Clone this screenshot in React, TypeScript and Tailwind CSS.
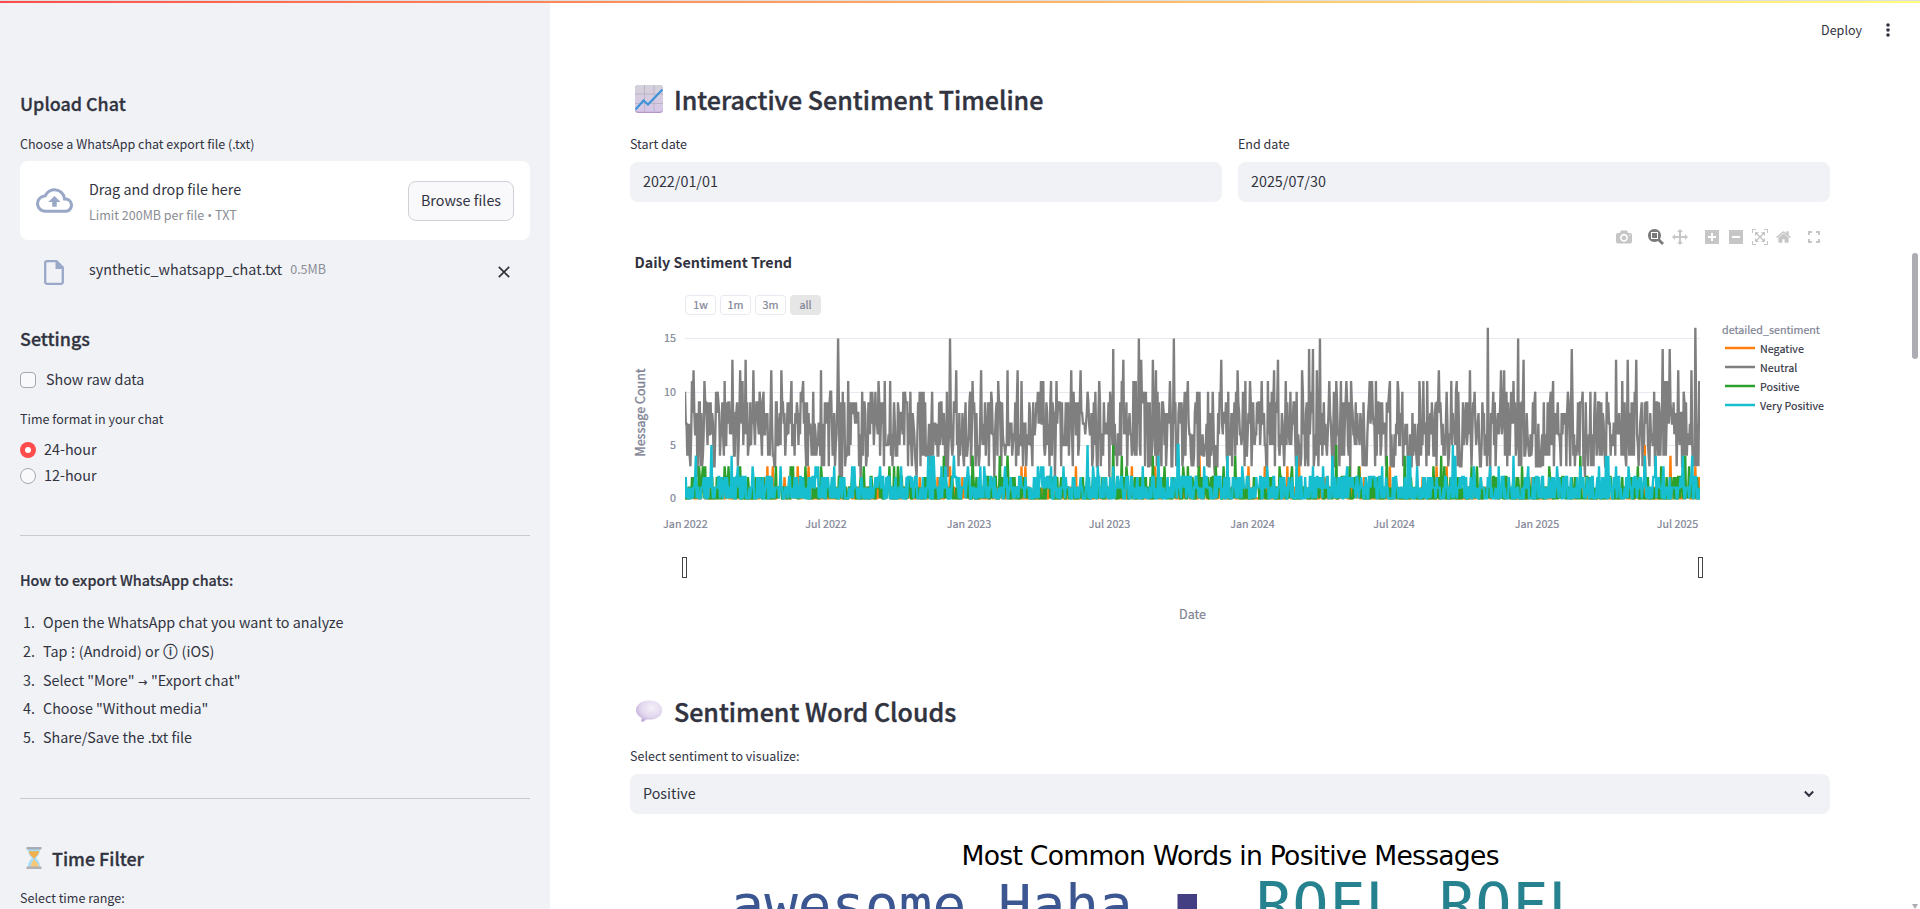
import type { ReactNode } from "react";

/* ---------- chart data ---------- */

const DAYS = 1307;
const PLOT_LEFT = 55;
const PLOT_WIDTH = 1015;
const ZERO_Y = 246.3;
const UNIT = 10.66;

type Peak = [value: number, positions: string];

const makeRandom = (seed: number) => {
  let s = seed;
  return () => {
    s = (s + 0x6d2b79f5) | 0;
    let t = Math.imul(s ^ (s >>> 15), 1 | s);
    t = (t + Math.imul(t ^ (t >>> 7), 61 | t)) ^ t;
    return ((t ^ (t >>> 14)) >>> 0) / 4294967296;
  };
};

const poisson = (rand: () => number, lambda: number) => {
  const limit = Math.exp(-lambda);
  let k = 0;
  let p = rand();
  while (p > limit) {
    k += 1;
    p *= rand();
  }
  return k;
};

/* Peak positions are tenths of a pixel from the left edge of the plot. */
const buildSeries = (seed: number, lambda: number, min: number, max: number, peaks: Peak[]) => {
  const rand = makeRandom(seed);
  const values = Array.from({ length: DAYS }, () => Math.max(min, Math.min(max, poisson(rand, lambda))));
  for (const [value, positions] of peaks) {
    for (const token of positions.split(" ")) {
      const day = Math.max(0, Math.min(DAYS - 1, Math.round(Number(token) / 7.772)));
      values[day] = value;
    }
  }
  return values;
};

const toPath = (values: number[]) =>
  values
    .map((v, i) => `${i ? "L" : "M"}${(PLOT_LEFT + (i * PLOT_WIDTH) / (DAYS - 1)).toFixed(2)},${(ZERO_Y - v * UNIT).toFixed(2)}`)
    .join("");

const neutral = buildSeries(41, 6.3, 3, 9, [
  [2, "122 1550 1570 1757 2314 2625 3096 3700 4243 5300 6650 8050 9000"],
  [10, "0 311 323 743 786 1157 1170 1279 1454 1465 1575 1775 1857 1870 1907 2186 2200 2250 2350 2361 2386 2471 2618 2854 3064 3529 3542 3889 4029 4100 4250 4596 4610 4729 4996 5011 5118 5148 5232 5279 5346 5429 5507 5580 5864 6057 6114 6175 6268 6318 6486 6611 7043 7132 7175 7421 7614 7711 7732 7900 8086 8214 8261 8500 8660 8832 8980 9055 9100 9220 9500 9690 9830 9930 9990"],
  [11, "68 196 400 575 1068 1179 1632 1939 2000 2050 2875 3132 3368 3557 3582 3657 3718 4139 4364 4482 4504 4846 4850 5025 5607 5653 5768 5832 6007 6446 6514 6557 6611 6657 6850 6868 6910 7050 7125 7346 7386 7425 7664 7721 8282 8679 9375 9803 9825 10143"],
  [12, "89 554 682 864 961 1357 2714 2964 3229 3325 3864 3957 4707 5528 5893 6168 6321 7535 7850 8157 8189 9936 10061"],
  [13, "471 607 4386 4561 4682 5361 5932 8389 9307 9425 9514"],
  [14, "4279 6243 6282 8871 9775 9850"],
  [15, "1528 2654 4536 4886 6353 8328"],
  [16, "8032 10107"],
]);

const negative = buildSeries(7, 0.5, 0, 1, [
  [2, "89 793 996 1925 2350 2525 2775 4889 4936 6257 6393 6796 6889 7375 8075 8475 8575 10139"],
  [3, "821 882 1125 1239 2654 3364 3407 3907 4471 4704 5632 5796 6025 6743 7046 7518 7614 10104"],
  [4, "5146 6143 9857"],
  [5, "9600"],
]);

const positive = buildSeries(23, 0.7, 0, 2, [
  [3, "139 175 204 400 432 550 907 1054 1082 1203 1357 1789 2043 2089 2132 4411 4793 4978 5025 5139 5311 5389 5946 6068 6646 6739 7482 7596 7864 7918 8368 8643 9532 9760 10043"],
  [4, "2589 2879 3146 3229 4368 4682 5504 7021 7199 7564 8950 10000"],
  [5, "4282 6511"],
]);

const veryPositive = buildSeries(99, 0.92, 0, 2, [
  [3, "525 675 954 1304 1332 1489 1668 1696 1950 2157 2561 2603 2829 2954 2996 3203 3529 3561 3582 3657 3782 4082 4125 4279 4575 5189 5571 5821 6282 6379 6618 6968 7318 7886 8050 8139 8436 8718 8950 9143 9311 9432 9785"],
  [4, "107 464 2436 2461 2486 2686 4736 5428 6114 6471 7228 7253 7703 8282 9207 9236 9596 9707 9982 10075"],
  [5, "261 4029 4936 4929 7675"],
]);

const series = [
  { label: "Negative", color: "#ff7f0e", values: negative },
  { label: "Neutral", color: "#7f7f7f", values: neutral },
  { label: "Positive", color: "#2ca02c", values: positive },
  { label: "Very Positive", color: "#17becf", values: veryPositive },
];

const ticks = [
  { x: 55.4, label: "Jan 2022" },
  { x: 196, label: "Jul 2022" },
  { x: 339, label: "Jan 2023" },
  { x: 479.5, label: "Jul 2023" },
  { x: 622.5, label: "Jan 2024" },
  { x: 764, label: "Jul 2024" },
  { x: 907, label: "Jan 2025" },
  { x: 1047.5, label: "Jul 2025" },
];

/* ---------- icons ---------- */

function BarIcon({ d, width = 1000, className }: { d: string; width?: number; className: string }) {
  return (
    <svg viewBox={`0 0 ${width} 1000`} className={`h-4 shrink-0 ${className}`}>
      <path d={d} transform="matrix(1 0 0 -1 0 850)" fill="currentColor" />
    </svg>
  );
}

const CAMERA =
  "m500 450c-83 0-150-67-150-150 0-83 67-150 150-150 83 0 150 67 150 150 0 83-67 150-150 150z m400 150h-120c-16 0-34 13-39 29l-31 93c-6 15-23 28-40 28h-340c-16 0-34-13-39-28l-31-94c-6-15-23-28-40-28h-120c-55 0-100-45-100-100v-450c0-55 45-100 100-100h800c55 0 100 45 100 100v450c0 55-45 100-100 100z m-400-550c-138 0-250 112-250 250 0 138 112 250 250 250 138 0 250-112 250-250 0-138-112-250-250-250z m365 380c-19 0-35 16-35 35 0 19 16 35 35 35 19 0 35-16 35-35 0-19-16-35-35-35z";
const ZOOM_BOX =
  "m1000-25l-250 251c40 63 63 138 63 218 0 224-182 406-407 406-224 0-406-182-406-406s183-406 407-406c80 0 155 22 218 62l250-250 125 125z m-812 250l0 438 437 0 0-438-437 0z m62 375l313 0 0-312-313 0 0 312z";
const PAN =
  "m1000 350l-187 188 0-125-250 0 0 250 125 0-188 187-187-187 125 0 0-250-250 0 0 125-188-188 186-187 0 125 252 0 0-250-125 0 187-188 188 188-125 0 0 250 250 0 0-126 187 188z";
const PLUS =
  "m1 787l0-875 875 0 0 875-875 0z m687-500l-187 0 0-187-125 0 0 187-188 0 0 125 188 0 0 187 125 0 0-187 187 0 0-125z";
const MINUS = "m0 788l0-876 876 0 0 876-876 0z m688-500l-500 0 0 125 500 0 0-125z";
const AUTOSCALE =
  "m250 850l-187 0-63 0 0-62 0-188 63 0 0 188 187 0 0 62z m688 0l-188 0 0-62 188 0 0-188 62 0 0 188 0 62-62 0z m-875-938l0 188-63 0 0-188 0-62 63 0 187 0 0 62-187 0z m875 188l0-188-188 0 0-62 188 0 62 0 0 62 0 188-62 0z m-125 188l-1 0-93-94-156 156 156 156 92-93 2 0 0 250-250 0 0-2 93-92-156-156-156 156 94 92 0 2-250 0 0-250 0 0 93 93 157-156-157-156-93 94 0 0 0-250 250 0 0 0-94 93 156 157 156-157-93-93 0 0 250 0 0 250z";
const HOME =
  "m786 296v-267q0-15-11-26t-25-10h-214v214h-143v-214h-214q-15 0-25 10t-11 26v267q0 1 0 2t0 2l321 264 321-264q1-1 1-4z m124 39l-34-41q-5-5-12-6h-2q-7 0-12 3l-386 322-386-322q-7-4-13-4-7 2-12 7l-35 41q-4 5-3 13t6 12l401 334q18 15 42 15t43-15l136-114v109q0 8 5 13t13 5h107q8 0 13-5t5-13v-227l122-102q5-5 6-12t-4-13z";

function ChartEmoji() {
  return (
    <svg viewBox="0 0 28 28" className="ml-[5px] h-7 w-7 shrink-0">
      <defs>
        <linearGradient id="sheet" x1="0" y1="0" x2="0" y2="1">
          <stop offset="0" stopColor="#d5d2da" />
          <stop offset="1" stopColor="#d6c6e8" />
        </linearGradient>
      </defs>
      <rect width="28" height="28" rx="3.5" fill="#b195c9" />
      <rect width="28" height="26.8" rx="3.5" fill="url(#sheet)" />
      <path d="M9.500 0v27M19 0v27M0 9h28M0 18.500h28" stroke="#bdb5c6" strokeWidth="1" />
      <path d="M0.500 24.500 8.500 15.500l4.500 4L27.500 4.500" fill="none" stroke="#3a93d8" strokeWidth="2.2" />
    </svg>
  );
}

function BubbleEmoji() {
  return (
    <svg viewBox="0 0 28 22" className="ml-[5px] h-[22px] w-7 shrink-0">
      <defs>
        <radialGradient id="bubble" cx="0.6" cy="0.35" r="0.7">
          <stop offset="0" stopColor="#f4f0f8" />
          <stop offset="0.6" stopColor="#e2d8ee" />
          <stop offset="1" stopColor="#bfa9d8" />
        </radialGradient>
      </defs>
      <path
        d="M14.200.5C21.500.5 27.200 4.700 27.200 10.200S21.500 19.600 14.200 19.600c-1 0-2-.1-2.900-.2-1.300 1.500-3 2.400-4.800 2.500-.4-1.400-.2-2.500.2-3.900C3.300 16.300 1 13.500 1 10.200 1 4.700 6.900.5 14.200.5Z"
        fill="url(#bubble)"
      />
    </svg>
  );
}

function HourglassEmoji() {
  return (
    <svg viewBox="0 0 16 22" className="ml-1.5 h-[22px] w-4 shrink-0">
      <path d="M2 2h12c0 4.500-1.500 6.300-4 9 2.500 2.700 4 4.500 4 9H2c0-4.500 1.500-6.300 4-9-2.500-2.700-4-4.500-4-9Z" fill="#a9dcf8" />
      <path d="M2.800 4.300h10.400c-.5 3-1.800 4.300-4.700 6.700v1h-1v-1C4.600 8.600 3.300 7.300 2.800 4.300Z" fill="#f0b04c" />
      <path d="M8 12.500c2 2 4.500 3.500 5 7.500H4.500c.2-3.500 2-5.500 3.500-7.500Z" fill="#f7c878" />
      <rect x="0.500" y="0" width="15" height="2.500" rx="0.6" fill="#a7abb5" />
      <rect x="0.500" y="19.500" width="15" height="2.500" rx="0.6" fill="#b2b0b3" />
    </svg>
  );
}

/* ---------- pieces ---------- */

function SideHeading({ children }: { children: ReactNode }) {
  return <h3 className="flex h-6 items-center text-[17.900px] leading-6 font-medium [-webkit-text-stroke:0.300px]">{children}</h3>;
}

function Label({ children }: { children: ReactNode }) {
  return <div className="h-5 text-[12.530px] leading-5">{children}</div>;
}

function PageHeading({ icon, children }: { icon: ReactNode; children: ReactNode }) {
  return (
    <h2 className="flex h-8 items-center text-[25px] leading-8 font-medium [-webkit-text-stroke:0.400px]">
      {icon}
      <span className="ml-[11px]">{children}</span>
    </h2>
  );
}

function Step({ n, children }: { n: number; children: ReactNode }) {
  return (
    <li className="flex h-[28.700px] items-center">
      <span className="mr-2 w-[15px] text-right">{n}.</span>
      <span className="whitespace-pre">{children}</span>
    </li>
  );
}

function Sidebar() {
  return (
    <aside className="flex h-full w-[550px] shrink-0 flex-col bg-[#f0f2f6] px-5 pt-[91px] text-[14.330px] leading-6">
      <SideHeading>Upload Chat</SideHeading>
      <div className="mt-[19px]">
        <Label>Choose a WhatsApp chat export file (.txt)</Label>
      </div>
      <div className="mt-[7px] flex h-[79px] items-center rounded-lg bg-white px-4">
        <svg viewBox="0 0 24 24" className="h-[37px] w-[37px] shrink-0 text-[#9aa8c8]" fill="currentColor">
          <path d="M19.350 10.040A7.490 7.490 0 0 0 12 4C9.110 4 6.600 5.640 5.350 8.040A5.994 5.994 0 0 0 0 14c0 3.310 2.690 6 6 6h13c2.760 0 5-2.240 5-5 0-2.640-2.050-4.780-4.650-4.960zM19 18H6c-2.210 0-4-1.790-4-4 0-2.050 1.530-3.760 3.560-3.970l1.070-.11.500-.95A5.469 5.469 0 0 1 12 6c2.620 0 4.880 1.860 5.390 4.430l.300 1.500 1.530.11A2.980 2.980 0 0 1 22 15c0 1.650-1.350 3-3 3zM8 13h2.550v3h2.900v-3H16l-4-4z" />
        </svg>
        <div className="mt-0.5 ml-4 flex grow flex-col">
          <span className="h-6">Drag and drop file here</span>
          <span className="mt-0.5 flex h-6 text-[12.530px] text-[#8b8d95]">
            Limit 200MB per file
            <span className="mx-[3px] [font-family:'Open_Sans'] text-[13px]">•</span>
            TXT
          </span>
        </div>
        <button className="h-10 w-[106px] rounded-lg border border-[#d0d1d7] bg-[#f9f9fb] pb-0.5">Browse files</button>
      </div>
      <div className="mt-[15px] flex h-8 items-center pr-4">
        <div className="flex w-[69px] justify-start pl-6">
          <svg viewBox="0 0 20 25" className="mt-0.5 h-[25px] w-5 text-[#9aa8c8]">
            <path d="M3 1.200h9.500l6.300 6.300V22a1.800 1.800 0 0 1-1.800 1.800H3A1.800 1.800 0 0 1 1.200 22V3A1.800 1.800 0 0 1 3 1.200Z" fill="none" stroke="currentColor" strokeWidth="2.300" />
            <path d="M11.500 1v8H19.500Z" fill="currentColor" />
          </svg>
        </div>
        <span className="mb-1">synthetic_whatsapp_chat.txt</span>
        <span className="mb-1 ml-2 grow text-[12.530px] text-[#8b8d95]">0.5MB</span>
        <svg viewBox="0 0 12 12" className="mt-0.5 mr-1 h-3 w-3">
          <path d="M.8.8 11.200 11.200M11.200.8.8 11.200" stroke="#31333f" strokeWidth="1.700" />
        </svg>
      </div>
      <div className="mt-[39px]">
        <SideHeading>Settings</SideHeading>
      </div>
      <label className="mt-[18px] flex h-6 items-center">
        <span className="mr-2.5 h-4 w-4 rounded border border-[#a6a8b1] bg-[#f9f9fb]" />
        <span className="pb-0.5">Show raw data</span>
      </label>
      <div className="mt-[17px]">
        <Label>Time format in your chat</Label>
      </div>
      <div className="mt-2 flex h-[26px] items-center">
        <span className="mr-2 flex h-4 w-4 items-center justify-center rounded-full bg-[#ff4b4b]">
          <span className="h-1.5 w-1.5 rounded-full bg-white" />
        </span>
        <span className="pb-0.5">24-hour</span>
      </div>
      <div className="flex h-[25px] items-center">
        <span className="mr-2 h-4 w-4 rounded-full border border-[#a6a8b1] bg-[#f9f9fb]" />
        <span className="pb-px">12-hour</span>
      </div>
      <hr className="mt-[47px] border-[#c8cad0]" />
      <p className="mt-8 h-6 font-medium [-webkit-text-stroke:0.200px]">How to export WhatsApp chats:</p>
      <ol className="mt-4 flex flex-col">
        <Step n={1}>Open the WhatsApp chat you want to analyze</Step>
        <Step n={2}>
          Tap <span className="inline-flex w-[5px] justify-center">⋮</span> (Android) or{" "}
          <span className="inline-flex w-4 justify-center [-webkit-text-stroke:0.400px]">ⓘ</span> (iOS)
        </Step>
        <Step n={3}>
          Select "More" <span className="inline-flex w-[10px] justify-center [font-family:'DejaVu_Sans'] text-[11px] leading-none [-webkit-text-stroke:0.200px]">→</span> "Export chat"
        </Step>
        <Step n={4}>Choose "Without media"</Step>
        <Step n={5}>Share/Save the .txt file</Step>
      </ol>
      <hr className="mt-[47px] border-[#c8cad0]" />
      <div className="mt-[47px]">
        <SideHeading>
          <HourglassEmoji />
          <span className="ml-2.5">Time Filter</span>
        </SideHeading>
      </div>
      <div className="mt-[18px]">
        <Label>Select time range:</Label>
      </div>
    </aside>
  );
}

function SentimentChart() {
  return (
    <svg viewBox="0 0 1200 400" className="block h-[400px] w-[1200px] shrink-0">
      <defs>
        <clipPath id="plot">
          <rect x="55" y="0" width="1015" height="248" />
        </clipPath>
      </defs>
      <text x="4.500" y="16" fontSize="14.330" fontWeight="700" fill="#31333f">
        Daily Sentiment Trend
      </text>
      {["1w", "1m", "3m", "all"].map((label, i) => (
        <g key={label}>
          <rect x={55.5 + i * 35} y="43.500" width="30" height="19" rx="3" fill={label === "all" ? "#e6e6e6" : "#fff"} stroke={label === "all" ? "#e6e6e6" : "#e6eaf1"} />
          <text x={70.5 + i * 35} y="57" fontSize="10.740" textAnchor="middle" fill="#808495" stroke="#808495" strokeWidth="0.200">
            {label}
          </text>
        </g>
      ))}
      {[0, 5, 10, 15].map((v) => (
        <g key={v}>
          <path d={`M55 ${Math.round(ZERO_Y - v * UNIT) + 0.5}H1070`} stroke="#e6eaf1" />
          <text x="46" y={ZERO_Y - v * UNIT + 4} fontSize="10.740" textAnchor="end" fill="#808495" stroke="#808495" strokeWidth="0.200">
            {v}
          </text>
        </g>
      ))}
      <g clipPath="url(#plot)">
        {series.map((s) => (
          <path key={s.label} d={toPath(s.values)} fill="none" stroke={s.color} strokeWidth="2.350" strokeMiterlimit="2" />
        ))}
      </g>
      {ticks.map((t) => (
        <text key={t.label} x={t.x} y="276" fontSize="10.740" textAnchor="middle" fill="#808495" stroke="#808495" strokeWidth="0.200">
          {t.label}
        </text>
      ))}
      <text transform="translate(14.500 160.500) rotate(-90)" fontSize="12.530" textAnchor="middle" fill="#808495" stroke="#808495" strokeWidth="0.350">
        Message Count
      </text>
      <text x="562.500" y="366.500" fontSize="12.530" textAnchor="middle" fill="#808495" stroke="#808495" strokeWidth="0.200">
        Date
      </text>
      {[52.5, 1068.5].map((x) => (
        <rect key={x} x={x} y="305.500" width="4" height="20" fill="#fff" stroke="#444" />
      ))}
      <text x="1092" y="82" fontSize="10.740" fill="#808495" stroke="#808495" strokeWidth="0.200">
        detailed_sentiment
      </text>
      {series.map((s, i) => (
        <g key={s.label}>
          <path d={`M1095 ${96 + i * 19}h30`} stroke={s.color} strokeWidth="2.500" />
          <text x="1130" y={101 + i * 19} fontSize="10.740" fill="#31333f" stroke="#31333f" strokeWidth="0.150">
            {s.label}
          </text>
        </g>
      ))}
    </svg>
  );
}

function ModeBar() {
  return (
    <div className="flex h-[31px] items-center justify-end pr-2.5 text-[#c6c6c6]">
      <BarIcon d={CAMERA} className="w-4" />
      <BarIcon d={ZOOM_BOX} className="ml-4 w-4 text-[#7a7a7a]" />
      <BarIcon d={PAN} className="ml-2 w-4" />
      <BarIcon d={PLUS} width={875} className="ml-[17px] w-3.5" />
      <BarIcon d={MINUS} width={875} className="ml-2.5 w-3.5" />
      <BarIcon d={AUTOSCALE} className="ml-[9px] w-4" />
      <BarIcon d={HOME} width={928.6} className="ml-2 w-[15px]" />
      <svg viewBox="0 0 12 12" className="ml-[17px] h-3 w-3" fill="none" stroke="currentColor" strokeWidth="2">
        <path d="M1 4V1h3M8 1h3v3M11 8v3H8M4 11H1V8" />
      </svg>
    </div>
  );
}

function DateField({ label, value }: { label: string; value: string }) {
  return (
    <div className="flex flex-1 flex-col">
      <Label>{label}</Label>
      <div className="mt-2 flex h-10 items-center rounded-lg bg-[#f0f2f6] px-[13px] pb-0.5 text-[14.330px]">{value}</div>
    </div>
  );
}

function WordCloud() {
  return (
    <svg viewBox="0 0 1200 95" className="block h-[95px] w-[1200px] shrink-0 [font-family:'DejaVu_Sans']">
      <text x="600.500" y="50.500" fontSize="26.600" textAnchor="middle" textLength="538" fill="#000">
        Most Common Words in Positive Messages
      </text>
      <g fontFamily="DejaVu Sans Mono">
        <g fontSize="55.900" fill="#3b5690">
          <text x="100.500" y="109.500">awesome</text>
          <text x="368" y="109.500">Haha</text>
        </g>
        <rect x="547.500" y="80" width="19.500" height="20" fill="#443f83" />
        <text x="626" y="112" fontSize="60.300" fill="#26828e">
          ROFL
        </text>
        <text x="809" y="112" fontSize="60.300" fill="#26828e">
          ROFL
        </text>
      </g>
    </svg>
  );
}

function Main() {
  return (
    <main className="flex h-full w-[1200px] shrink-0 flex-col overflow-hidden pt-[83px]">
      <PageHeading icon={<ChartEmoji />}>Interactive Sentiment Timeline</PageHeading>
      <div className="mt-[19px] flex gap-4">
        <DateField label="Start date" value="2022/01/01" />
        <DateField label="End date" value="2025/07/30" />
      </div>
      <div className="mt-[19px]">
        <ModeBar />
      </div>
      <SentimentChart />
      <div className="mt-[43px]">
        <PageHeading icon={<BubbleEmoji />}>Sentiment Word Clouds</PageHeading>
      </div>
      <div className="mt-[19px]">
        <Label>Select sentiment to visualize:</Label>
      </div>
      <div className="mt-2 flex h-10 shrink-0 items-center justify-between rounded-lg bg-[#f0f2f6] pr-4 pl-[13px] text-[14.330px]">
        <span className="pb-0.5">Positive</span>
        <svg viewBox="0 0 10 8" className="h-2 w-2.5" fill="none" stroke="#31333f" strokeWidth="2">
          <path d="M.8 1.500 5 5.800 9.200 1.500" />
        </svg>
      </div>
      <WordCloud />
    </main>
  );
}

export default function App() {
  return (
    <div className="relative flex h-[909px] w-[1920px] overflow-hidden bg-white text-[#31333f] [font-family:'Noto_Sans_CJK_SC',sans-serif]">
      <Sidebar />
      <div className="w-20 shrink-0" />
      <Main />
      <div className="flex grow flex-col items-end justify-between pt-[253px] pr-0.5">
        <div className="h-[106px] w-1.5 rounded-full bg-[#acacb2]" />
        <svg viewBox="0 0 6 5" className="h-[5px] w-1.5">
          <path d="M0 0h6L3 5Z" fill="#acacb2" />
        </svg>
      </div>
      <div className="absolute inset-x-0 top-0">
        <div className="h-px bg-[#dfdfdf]" />
        <div className="h-0.5 bg-linear-to-r from-[#ff4b4b] to-[#fffd80]" />
        <div className="flex h-[54px] items-center justify-end gap-6 pr-[30px] text-[12.530px]">
          <span>Deploy</span>
          <svg viewBox="0 0 4 14" className="h-3.5 w-1" fill="#31333f">
            <circle cx="2" cy="2" r="1.800" />
            <circle cx="2" cy="7" r="1.800" />
            <circle cx="2" cy="12" r="1.800" />
          </svg>
        </div>
      </div>
    </div>
  );
}
